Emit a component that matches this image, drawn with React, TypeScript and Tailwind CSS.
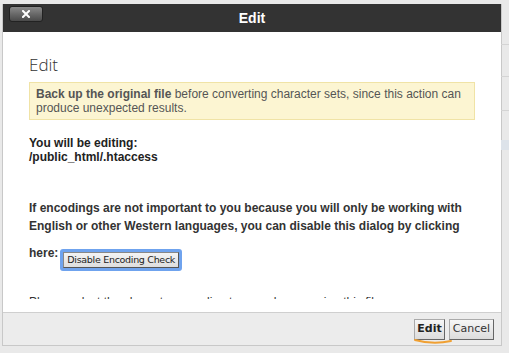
import React from 'react';

const sans = { fontFamily: '"Liberation Sans", Arial, sans-serif' };
const verdana = { fontFamily: '"DejaVu Sans", Verdana, sans-serif' };

const App: React.FC = () => {
  return (
    <div className="w-[509px] h-[353px] bg-[#e9e9e9] overflow-hidden relative" style={sans}>
      {/* faint rows of the page behind the dialog */}
      <div className="absolute right-0 top-[44px] w-[8px] h-px bg-[#d4d4d4]" />
      <div className="absolute right-0 top-[76px] w-[8px] h-px bg-[#d4d4d4]" />
      <div className="absolute right-0 top-[110px] w-[8px] h-px bg-[#d4d4d4]" />
      <div className="absolute right-0 top-[140px] w-[8px] h-[10px] bg-[#dde3ea]" />

      <div className="ml-[2px] mt-[4px] w-[500px] h-[342px] flex flex-col border border-[#c8c8c8] border-t-0 bg-white">
        {/* Title bar */}
        <div className="h-[28px] bg-[#333333] relative flex items-center justify-center shrink-0">
          <button className="absolute left-[6px] top-[2px] w-[34px] h-[16px] rounded-[3px] border border-[#222] bg-gradient-to-b from-[#8a8a8a] to-[#4a4a4a] flex items-center justify-center">
            <svg width="8" height="8" viewBox="0 0 8 8">
              <path d="M1 1 L7 7 M7 1 L1 7" stroke="#fff" strokeWidth="2" strokeLinecap="square" />
            </svg>
          </button>
          <span className="text-white text-[14px] font-bold">Edit</span>
        </div>

        {/* Body */}
        <div className="flex-1 bg-white">
          <div className="h-[267px] overflow-hidden px-[26px] pt-[23px]">
            <h2 className="text-[17px] text-[#333] font-light leading-[20px]" style={{ fontFamily: '"Open Sans", sans-serif' }}>Edit</h2>
            <div className="mt-[7px] bg-[#fcf5d2] border border-[#f0e3a6] px-[6px] py-[4px] text-[12px] leading-[14px] text-[#555]">
              <b className="text-[#555]">Back up the original file</b> before converting character sets, since this action can produce unexpected results.
            </div>

            <div className="mt-[16px] text-[12px] leading-[14px] font-bold text-[#222]">
              <div>You will be editing:</div>
              <div>/public_html/.htaccess</div>
            </div>

            <div className="mt-[35px] text-[12px] leading-[18px] font-bold text-[#333]">
              If encodings are not important to you because you will only be working with English or other Western languages, you can disable this dialog by clicking
            </div>
            <div className="mt-[11px] flex items-start text-[12px] font-bold text-[#333]">
              <span className="leading-[14px]">here:</span>
              <span className="ml-[2px] mt-[3px] rounded-[3px] border-[3px] border-[#6fa3ee] flex">
                <button className="px-[3px] h-[16px] bg-gradient-to-b from-[#f4f4f4] to-[#dedede] border border-[#888] border-b-[#555] border-r-[#555] text-[9.5px] tracking-[-0.3px] font-normal text-[#222] leading-[14px]" style={verdana}>
                  Disable Encoding Check
                </button>
              </span>
            </div>
            <div className="mt-[24px] text-[12px] leading-[14px] text-[#333]">
              Please select the character encoding to use when opening this file.
            </div>
          </div>
        </div>

        {/* Footer */}
        <div className="h-[33px] shrink-0 bg-[#ececec] border-t border-[#cfcfcf] flex items-start justify-end gap-[4px] pr-[7px] pt-[6px] relative" style={verdana}>
          <button className="h-[21px] px-[2px] bg-gradient-to-b from-[#f6f6f6] to-[#dcdcdc] border border-[#aaa] border-b-[#666] border-r-[#666] text-[11px] font-bold text-[#222]">Edit</button>
          <button className="h-[21px] px-[3px] bg-gradient-to-b from-[#f6f6f6] to-[#dcdcdc] border border-[#aaa] border-b-[#666] border-r-[#666] text-[11px] text-[#333]">Cancel</button>
          <svg className="absolute left-[410px] top-[26px]" width="40" height="6" viewBox="0 0 40 6">
            <path d="M2 1 Q20 6 38 2" stroke="#f0a032" strokeWidth="2" fill="none" strokeLinecap="round" />
          </svg>
        </div>
      </div>
    </div>
  );
};

export default App;
